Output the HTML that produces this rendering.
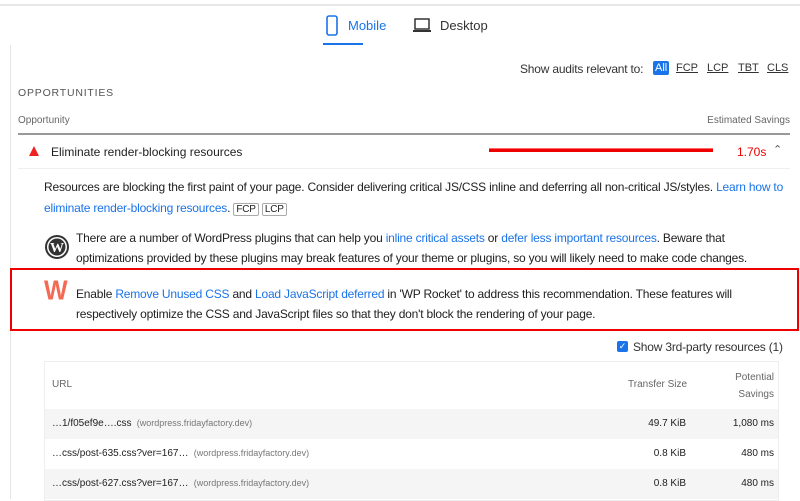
<!DOCTYPE html>
<html><head><style>
*{margin:0;padding:0;box-sizing:border-box}
body{width:800px;height:499px;overflow:hidden;background:#fff;font-family:"Liberation Sans",sans-serif;color:#212121;position:relative}
.a{position:absolute;white-space:nowrap}
a,.l{color:#1a73e8;text-decoration:none}
.t{font-size:12px}
.p{letter-spacing:-0.2px}
</style></head><body>
<div class="a" style="left:0;top:4px;width:800px;height:2px;background:#e8e8e8"></div>
<div class="a" style="left:10px;top:45px;width:1px;height:454px;background:#e6e6e6"></div>
<svg class="a" style="left:326px;top:15px" width="12" height="22"><rect x="1" y="1" width="10" height="19" rx="2" fill="none" stroke="#1a73e8" stroke-width="1.6"/></svg>
<div class="a" style="left:348px;top:18px;font-size:13px;color:#1a73e8">Mobile</div>
<div class="a" style="left:323px;top:43px;width:40px;height:2px;background:#1a73e8"></div>
<svg class="a" style="left:413px;top:18px" width="18" height="16"><rect x="2" y="1" width="14" height="10" fill="none" stroke="#333" stroke-width="1.5"/><rect x="0" y="12" width="18" height="2" fill="#333"/></svg>
<div class="a" style="left:440px;top:18px;font-size:13px;color:#333">Desktop</div>
<div class="a t p" style="left:520px;top:62px;color:#333">Show audits relevant to:</div>
<div class="a t" style="left:653px;top:61px;background:#1a73e8;color:#fff;padding:1px 2px;border-radius:2px;font-size:11px">All</div>
<div class="a t" style="left:676px;top:62px;color:#333;text-decoration:underline;font-size:11px">FCP</div>
<div class="a t" style="left:707px;top:62px;color:#333;text-decoration:underline;font-size:11px">LCP</div>
<div class="a t" style="left:738px;top:62px;color:#333;text-decoration:underline;font-size:11px">TBT</div>
<div class="a t" style="left:767px;top:62px;color:#333;text-decoration:underline;font-size:11px">CLS</div>
<div class="a" style="left:18px;top:87px;font-size:10.5px;letter-spacing:.8px;color:#555">OPPORTUNITIES</div>
<div class="a" style="left:18px;top:115px;font-size:10px;color:#666">Opportunity</div>
<div class="a" style="right:10px;top:115px;font-size:10px;color:#666">Estimated Savings</div>
<div class="a" style="left:18px;top:133px;width:772px;height:2px;background:#999"></div>
<svg class="a" style="left:29px;top:146px" width="10" height="10"><polygon points="5,0 10,10 0,10" fill="#e22"/></svg>
<div class="a t" style="left:51px;top:145px">Eliminate render-blocking resources</div>
<div class="a" style="left:489px;top:148px;width:224px;height:4px;background:#e00;border-top:1px solid #f66"></div>
<div class="a t" style="left:737px;top:145px;color:#e00">1.70s</div>
<div class="a" style="left:773px;top:143px;font-size:11px;color:#555">&#8963;</div>
<div class="a" style="left:18px;top:168px;width:772px;height:1px;background:#eee"></div>
<div class="a t p" style="left:44px;top:177px;line-height:21px;white-space:normal;width:745px">Resources are blocking the first paint of your page. Consider delivering critical JS/CSS inline and deferring all non-critical JS/styles. <span class="l">Learn how to eliminate render-blocking resources</span>. <span style="border:1px solid #aaa;font-size:10px;padding:0 2px;border-radius:2px">FCP</span> <span style="border:1px solid #aaa;font-size:10px;padding:0 2px;border-radius:2px">LCP</span></div>
<svg class="a" style="left:44px;top:234px" width="26" height="26"><circle cx="13" cy="13" r="12" fill="#333"/><circle cx="13" cy="13" r="10" fill="#fff"/><circle cx="13" cy="13" r="8.5" fill="#333"/><text x="13" y="18" font-family="Liberation Serif" font-weight="bold" font-size="14" fill="#fff" text-anchor="middle">W</text></svg>
<div class="a t p" style="left:76px;top:228px;line-height:20px;white-space:normal;width:715px">There are a number of WordPress plugins that can help you <span class="l">inline critical assets</span> or <span class="l">defer less important resources</span>. Beware that optimizations provided by these plugins may break features of your theme or plugins, so you will likely need to make code changes.</div>
<div class="a" style="left:10px;top:268px;width:789px;height:63px;border:2px solid #e00"></div>
<div class="a" style="left:44px;top:277px;font-size:25px;font-weight:bold;color:#f46b55;transform:scaleY(1.1)">W</div>
<div class="a t p" style="left:76px;top:284px;line-height:20px;white-space:normal;width:715px">Enable <span class="l">Remove Unused CSS</span> and <span class="l">Load JavaScript deferred</span> in 'WP Rocket' to address this recommendation. These features will respectively optimize the CSS and JavaScript files so that they don't block the rendering of your page.</div>
<div class="a" style="left:617px;top:341px;width:11px;height:11px;background:#1a73e8;border-radius:2px;color:#fff;font-size:9px;line-height:11px;text-align:center">&#10003;</div>
<div class="a t p" style="left:633px;top:340px;color:#333">Show 3rd-party resources (1)</div>
<div class="a" style="left:44px;top:361px;width:735px;height:140px;border:1px solid #eee"></div>
<div class="a" style="left:52px;top:379px;font-size:10px;color:#666">URL</div>
<div class="a" style="left:628px;top:379px;font-size:10px;color:#666">Transfer Size</div>
<div class="a" style="right:26px;top:369px;font-size:10px;color:#666;line-height:17px;text-align:right">Potential<br>Savings</div>
<div class="a" style="left:45px;top:409px;width:733px;height:30px;background:#f5f5f5"></div>
<div class="a" style="left:45px;top:469px;width:733px;height:30px;background:#f5f5f5"></div>
<div class="a" style="left:52px;top:418px;font-size:10px">…1/f05ef9e….css <span style="font-size:9px;color:#777">&nbsp;(wordpress.fridayfactory.dev)</span></div>
<div class="a" style="left:52px;top:448px;font-size:10px">…css/post-635.css?ver=167… <span style="font-size:9px;color:#777">&nbsp;(wordpress.fridayfactory.dev)</span></div>
<div class="a" style="left:52px;top:478px;font-size:10px">…css/post-627.css?ver=167… <span style="font-size:9px;color:#777">&nbsp;(wordpress.fridayfactory.dev)</span></div>
<div class="a" style="right:114px;top:418px;font-size:10px">49.7 KiB</div>
<div class="a" style="right:114px;top:448px;font-size:10px">0.8 KiB</div>
<div class="a" style="right:114px;top:478px;font-size:10px">0.8 KiB</div>
<div class="a" style="right:26px;top:418px;font-size:10px">1,080 ms</div>
<div class="a" style="right:26px;top:448px;font-size:10px">480 ms</div>
<div class="a" style="right:26px;top:478px;font-size:10px">480 ms</div>
</body></html>
